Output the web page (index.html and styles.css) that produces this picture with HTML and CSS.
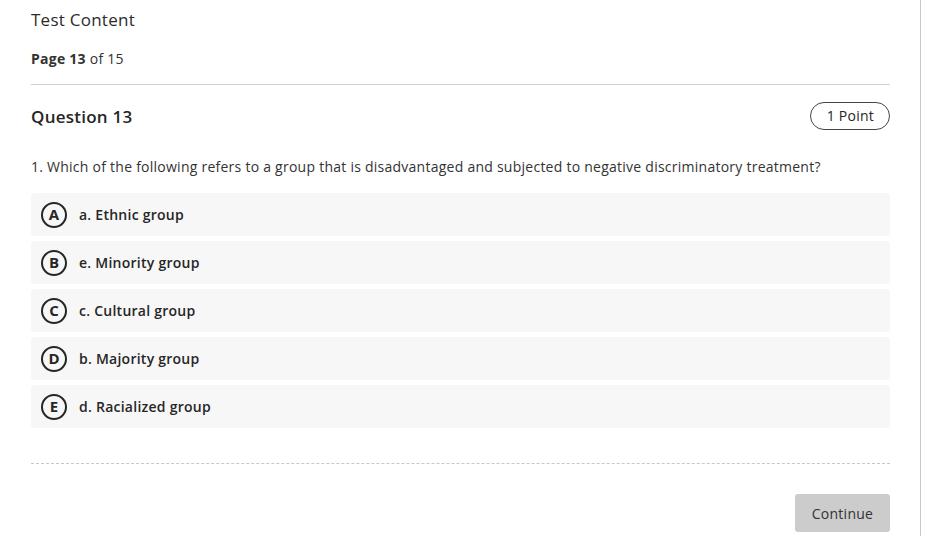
FILE: index.html
```html
<!DOCTYPE html>
<html>
<head>
<meta charset="utf-8">
<link rel="stylesheet" href="styles.css">
</head>
<body>
<div class="page">
  <div class="title">Test Content</div>
  <div class="pager"><b>Page 13</b> of 15</div>
  <div class="rule"></div>
  <div class="qhead">
    <div class="qtitle">Question 13</div>
    <div class="points">1 Point</div>
  </div>
  <div class="qtext">1. Which of the following refers to a group that is disadvantaged and subjected to negative discriminatory treatment?</div>
  <div class="options">
    <div class="option"><span class="letter">A</span><span class="label">a. Ethnic group</span></div>
    <div class="option"><span class="letter">B</span><span class="label">e. Minority group</span></div>
    <div class="option"><span class="letter">C</span><span class="label">c. Cultural group</span></div>
    <div class="option"><span class="letter">D</span><span class="label">b. Majority group</span></div>
    <div class="option"><span class="letter">E</span><span class="label">d. Racialized group</span></div>
  </div>
  <div class="dashed"></div>
  <div class="actions"><button class="continue">Continue</button></div>
</div>
</body>
</html>
```
FILE: styles.css
```css
html, body { margin: 0; padding: 0; background: #fff; }
body { font-family: "Open Sans", "Liberation Sans", sans-serif; color: #262626; letter-spacing: 0.25px; }
.page {
  width: 921px;
  height: 536px;
  box-sizing: border-box;
  border-right: 1px solid #c8c8c8;
  padding: 8px 30px 0 31px;
}
.title { font-size: 17px; line-height: 24px; color: #2b2b2b; }
.pager { font-size: 14px; line-height: 20px; margin-top: 17px; color: #333; }
.pager b { font-weight: 700; }
.rule { height: 1px; background: #d0d0d0; margin-top: 15px; }
.qhead { display: flex; justify-content: space-between; align-items: center; margin-top: 17px; }
.qtitle { font-size: 17px; font-weight: 600; color: #262626; }
.points {
  font-size: 14px; line-height: 20px; padding: 3px 15px 3px 16px;
  border: 1px solid #444; border-radius: 14px; color: #262626;
}
.qtext { font-size: 14px; line-height: 20px; margin-top: 27px; color: #333; }
.options { display: flex; flex-direction: column; gap: 5px; margin-top: 16px; }
.option {
  height: 43px; background: #f7f7f7; border-radius: 3px;
  display: flex; align-items: center; padding-left: 10px;
}
.letter {
  width: 22px; height: 22px; border: 2px solid #262626; border-radius: 50%;
  display: flex; align-items: center; justify-content: center;
  font-size: 15px; font-weight: 700; color: #262626; line-height: 1; letter-spacing: 0;
}
.label { margin-left: 12px; font-size: 14px; font-weight: 600; color: #262626; }
.dashed { margin-top: 35px; border-top: 1px dashed #c8c8c8; }
.actions { display: flex; justify-content: flex-end; margin-top: 30px; }
.continue {
  font-family: "Open Sans", "Liberation Sans", sans-serif; letter-spacing: 0.25px;
  font-size: 14px; color: #333; background: #cccccc; border: none;
  border-radius: 3px; width: 95px; height: 38px;
}
```
